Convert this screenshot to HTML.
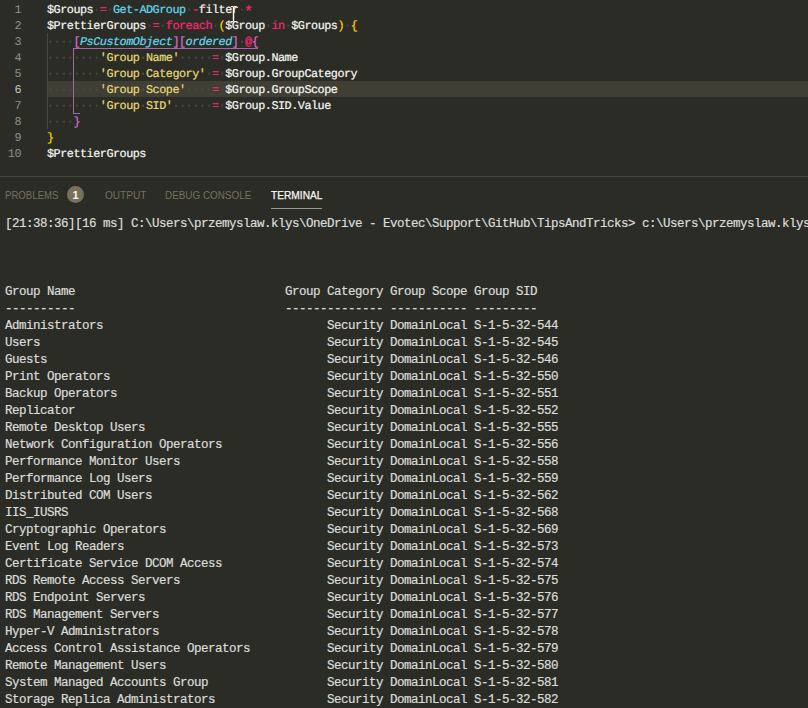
<!DOCTYPE html>
<html><head><meta charset="utf-8"><title>VS Code</title>
<style>
html,body{margin:0;padding:0;}
body{width:808px;height:708px;overflow:hidden;background:#2b2c26;position:relative;font-family:"Liberation Sans",sans-serif;}
#ed{position:absolute;left:0;top:1px;width:808px;}
.ln{text-rendering:geometricPrecision;position:relative;height:16px;line-height:16px;white-space:pre;font-family:"Liberation Mono",monospace;font-size:11.8px;letter-spacing:-0.4812px;color:#f8f8f2;}
.ln .n{position:absolute;left:0;top:1px;width:21px;text-align:right;color:#90908a;}
.ln.cur .n{color:#c2c2bf;}
.ln .c{position:absolute;left:47px;top:1px;right:0;height:16px;-webkit-text-stroke-width:0.2px;}
.ln.cur::before{content:"";position:absolute;left:47px;right:0;top:0;height:16px;background:#403f36;}
.ln .c *{position:relative;}
i.w{font-style:normal;color:#4b4c45;}
.v{color:#f8f8f2;} .k{color:#f92672;} .f{color:#66d9ef;} .t{color:#66d9ef;font-style:italic;}
.s{color:#e6db74;} .b1{color:#ffd700;} .b2{color:#da70d6;}
.s i.w{color:#5e5b3e;}
.ln .c .ast{font-size:15px;letter-spacing:0;top:3px;left:-1px;line-height:1px;}
.g{position:absolute;background:#464741;}
.p{position:absolute;background:#a06aa0;}
#pb{position:absolute;left:0;top:176px;width:808px;height:1px;background:#44463d;}
.tab{position:absolute;top:188px;height:14px;line-height:14px;font-size:11px;color:#75715e;white-space:nowrap;transform-origin:0 0;}
#badge{position:absolute;left:67px;top:186px;width:17px;height:17px;border-radius:9px;background:#75715e;color:#f8f8f2;font-size:11px;font-weight:bold;line-height:19px;text-align:center;}
#ul{position:absolute;left:271px;top:208px;width:51px;height:1px;background:#9a9888;}
#term{position:absolute;left:5px;top:216px;margin:0;font-family:"Liberation Mono",monospace;font-size:12.5px;letter-spacing:-0.501px;line-height:17px;color:#dcdcd8;-webkit-text-stroke:0.2px #dcdcd8;white-space:pre;}
#cursor{position:absolute;left:230.3px;top:6px;width:7px;height:16px;}
</style></head><body>
<div id="ed">
<div class="ln"><span class="n">1</span><span class="c"><span class="v">$Groups</span><i class="w">·</i><span class="k">=</span><i class="w">·</i><span class="f">Get-ADGroup</span><i class="w">·</i><span class="k">-</span><span class="v">filter</span><i class="w">·</i><span class="k ast">*</span></span></div>
<div class="ln"><span class="n">2</span><span class="c"><span class="v">$PrettierGroups</span><i class="w">·</i><span class="k">=</span><i class="w">·</i><span class="k">foreach</span><i class="w">·</i><span class="b1">(</span><span class="v">$Group</span><i class="w">·</i><span class="k">in</span><i class="w">·</i><span class="v">$Groups</span><span class="b1">)</span><i class="w">·</i><span class="b1">{</span></span></div>
<div class="ln"><span class="n">3</span><span class="c"><i class="w">····</i><span class="b2">[</span><span class="t">PsCustomObject</span><span class="b2">]</span><span class="b2">[</span><span class="t">ordered</span><span class="b2">]</span><i class="w">·</i><span class="k">@</span><span class="b2">{</span></span></div>
<div class="ln"><span class="n">4</span><span class="c"><i class="w">········</i><span class="s">'Group<i class="w">·</i>Name'</span><i class="w">·····</i><span class="k">=</span><i class="w">·</i><span class="v">$Group.Name</span></span></div>
<div class="ln"><span class="n">5</span><span class="c"><i class="w">········</i><span class="s">'Group<i class="w">·</i>Category'</span><i class="w">·</i><span class="k">=</span><i class="w">·</i><span class="v">$Group.GroupCategory</span></span></div>
<div class="ln cur"><span class="n">6</span><span class="c"><i class="w">········</i><span class="s">'Group<i class="w">·</i>Scope'</span><i class="w">····</i><span class="k">=</span><i class="w">·</i><span class="v">$Group.GroupScope</span></span></div>
<div class="ln"><span class="n">7</span><span class="c"><i class="w">········</i><span class="s">'Group<i class="w">·</i>SID'</span><i class="w">······</i><span class="k">=</span><i class="w">·</i><span class="v">$Group.SID.Value</span></span></div>
<div class="ln"><span class="n">8</span><span class="c"><i class="w">····</i><span class="b2">}</span></span></div>
<div class="ln"><span class="n">9</span><span class="c"><span class="b1">}</span></span></div>
<div class="ln"><span class="n">10</span><span class="c"><span class="v">$PrettierGroups</span></span></div>
</div>
<div class="g" style="left:47px;top:33px;width:1px;height:96px"></div>
<div class="p" style="left:73px;top:48px;width:185px;height:1px"></div>
<div class="p" style="left:73px;top:48px;width:1px;height:66px"></div>
<div class="p" style="left:73px;top:113px;width:7px;height:1px"></div>
<svg id="cursor" viewBox="0 0 7 16"><path d="M1 0.5H3M4 0.5H6.5M1 15.5H3M4 15.5H6.5" stroke="#fff" stroke-width="1" fill="none"/><path d="M3.5 0.5V15.5" stroke="#fff" stroke-width="1.4" fill="none"/></svg>
<div id="pb"></div>
<div class="tab" style="left:5.1px;transform:scaleX(0.875)">PROBLEMS</div>
<div id="badge">1</div>
<div class="tab" style="left:104.5px;transform:scaleX(0.915)">OUTPUT</div>
<div class="tab" style="left:164.9px;transform:scaleX(0.9)">DEBUG CONSOLE</div>
<div class="tab" style="left:270.8px;color:#f8f8f2;-webkit-text-stroke:0.25px #f8f8f2;transform:scaleX(0.925)">TERMINAL</div>
<div id="ul"></div>
<pre id="term">[21:38:36][16 ms] C:\Users\przemyslaw.klys\OneDrive - Evotec\Support\GitHub\TipsAndTricks&gt; c:\Users\przemyslaw.klys\OneDrive



Group Name                              Group Category Group Scope Group SID
----------                              -------------- ----------- ---------
Administrators                                Security DomainLocal S-1-5-32-544
Users                                         Security DomainLocal S-1-5-32-545
Guests                                        Security DomainLocal S-1-5-32-546
Print Operators                               Security DomainLocal S-1-5-32-550
Backup Operators                              Security DomainLocal S-1-5-32-551
Replicator                                    Security DomainLocal S-1-5-32-552
Remote Desktop Users                          Security DomainLocal S-1-5-32-555
Network Configuration Operators               Security DomainLocal S-1-5-32-556
Performance Monitor Users                     Security DomainLocal S-1-5-32-558
Performance Log Users                         Security DomainLocal S-1-5-32-559
Distributed COM Users                         Security DomainLocal S-1-5-32-562
IIS_IUSRS                                     Security DomainLocal S-1-5-32-568
Cryptographic Operators                       Security DomainLocal S-1-5-32-569
Event Log Readers                             Security DomainLocal S-1-5-32-573
Certificate Service DCOM Access               Security DomainLocal S-1-5-32-574
RDS Remote Access Servers                     Security DomainLocal S-1-5-32-575
RDS Endpoint Servers                          Security DomainLocal S-1-5-32-576
RDS Management Servers                        Security DomainLocal S-1-5-32-577
Hyper-V Administrators                        Security DomainLocal S-1-5-32-578
Access Control Assistance Operators           Security DomainLocal S-1-5-32-579
Remote Management Users                       Security DomainLocal S-1-5-32-580
System Managed Accounts Group                 Security DomainLocal S-1-5-32-581
Storage Replica Administrators                Security DomainLocal S-1-5-32-582</pre>
</body></html>
